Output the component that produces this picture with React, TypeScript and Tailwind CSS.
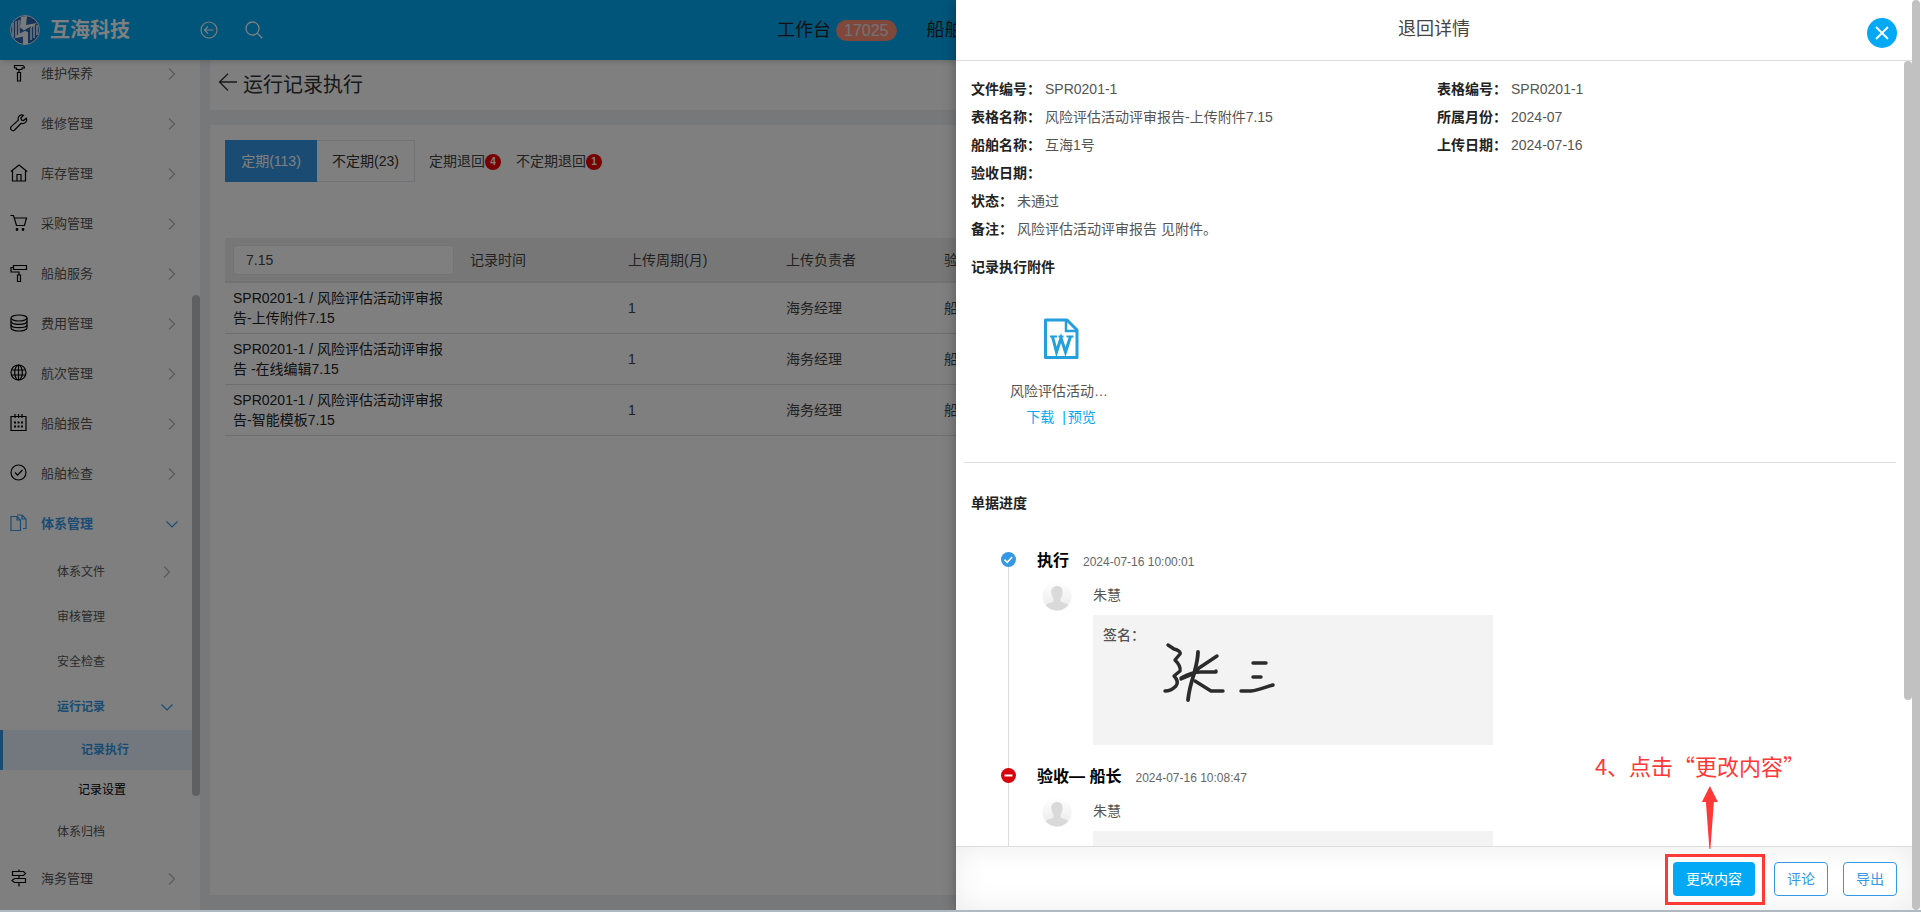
import { useState } from "react";
import type { ReactNode } from "react";

type MenuItem = {
  label: string;
  icon: ReactNode;
};

const Icon = ({ children }: { children: ReactNode }) => (
  <svg
    width="18"
    height="18"
    viewBox="0 0 18 18"
    fill="none"
    stroke="currentColor"
    strokeWidth="1.2"
    aria-hidden="true"
  >
    {children}
  </svg>
);

const menuItems: MenuItem[] = [
  {
    label: "维护保养",
    icon: (
      <Icon>
        <path d="M4.5 1.5h8c1 0 1.800 1 2 2.500h-2.500v1.500H6.500V4H4.500z" />
        <path d="M9 5.500v3M7.500 8.500h3v8.500h-3z" />
      </Icon>
    ),
  },
  {
    label: "维修管理",
    icon: (
      <Icon>
        <path d="M16.300 4.200l-2.800 2.300-2-.5-.6-2 2.500-2.800c-2-.6-4.200.1-5 2-.4 1-.3 2 0 2.900L1.200 12.600c-.8 1-.7 2.400.2 3.300.9.900 2.300.9 3.200.1l6.600-6.700c1.800.6 3.800.1 4.800-1.500.7-1.100.8-2.500.3-3.600z" />
      </Icon>
    ),
  },
  {
    label: "库存管理",
    icon: (
      <Icon>
        <path d="M.8 7.500L9 1l8.200 6.500M2.500 6.500v10.500h13V6.500M7 17v-6.500h4V17" />
      </Icon>
    ),
  },
  {
    label: "采购管理",
    icon: (
      <Icon>
        <path d="M.5 1.500h3l3 10h8l2-7.500H4.500" />
        <circle cx="7" cy="15.500" r=".8" fill="currentColor" />
        <circle cx="13" cy="15.500" r=".8" fill="currentColor" />
      </Icon>
    ),
  },
  {
    label: "船舶服务",
    icon: (
      <Icon>
        <path d="M3.500 1.500h13v4h-13zM3.500 3.500H1v4.500h8v3" />
        <path d="M7.500 11h3v6.500h-3z" />
      </Icon>
    ),
  },
  {
    label: "费用管理",
    icon: (
      <Icon>
        <ellipse cx="9" cy="4" rx="8" ry="3" />
        <path d="M1 4v10c0 1.600 3.600 3 8 3s8-1.400 8-3V4" />
        <path d="M1 7.300c0 1.700 3.600 3 8 3s8-1.300 8-3M1 10.700c0 1.700 3.600 3 8 3s8-1.300 8-3" />
      </Icon>
    ),
  },
  {
    label: "航次管理",
    icon: (
      <Icon>
        <circle cx="8.500" cy="8.500" r="7.500" />
        <ellipse cx="8.500" cy="8.500" rx="3.800" ry="7.500" />
        <path d="M8.500 1v15M1.500 6h14M1.500 11h14" />
      </Icon>
    ),
  },
  {
    label: "船舶报告",
    icon: (
      <Icon>
        <path d="M1 2.500h15v14H1zM5 0v4M8.500 0v4M12 0v4" />
        <path d="M4 8.500h2M7.500 8.500h2M11 8.500h2M4 12.500h2M7.500 12.500h2M11 12.500h2" strokeWidth="2" />
      </Icon>
    ),
  },
  {
    label: "船舶检查",
    icon: (
      <Icon>
        <circle cx="8.500" cy="8.500" r="7.500" />
        <path d="M5 8.500l2.500 2.700L12.500 6" />
      </Icon>
    ),
  },
];

const subItems = ["体系文件", "审核管理", "安全检查"];

const rows = [
  { first: "SPR0201-1 / 风险评估活动评审报", second: "告-上传附件7.15" },
  { first: "SPR0201-1 / 风险评估活动评审报", second: "告 -在线编辑7.15" },
  { first: "SPR0201-1 / 风险评估活动评审报", second: "告-智能模板7.15" },
];

const Chevron = ({ down = false }: { down?: boolean }) => (
  <svg
    width="14"
    height="14"
    viewBox="0 0 14 14"
    fill="none"
    stroke="currentColor"
    strokeWidth="1.2"
    className={down ? "text-[#3498e6]" : "text-[#b4b4b4]"}
    aria-hidden="true"
  >
    {down ? <path d="M1.500 4.500L7 10l5.500-5.500" /> : <path d="M4 1.500L9.500 7 4 12.500" />}
  </svg>
);

const Header = () => (
  <header className="relative flex h-[60px] shrink-0 items-center bg-[#03a9f4] pl-[10px] shadow-md">
    <div className="flex w-[190px] items-center gap-[10px]">
      <svg width="30" height="30" viewBox="0 0 30 30" aria-hidden="true">
        <circle cx="15" cy="15" r="14.500" fill="#2a67b2" stroke="#e8eef5" />
        <path d="M3 8v14M6 6v16M9 5v15M21 10v15M24 9v14M27 10v10" stroke="#f2f5f8" strokeWidth="1.500" />
        <path d="M11 2l6-1-1 9 11-2-6 5h-3l-3 3 3 1v12l-5 .5v-8l-9 2 6-6 4-2-4-3z" fill="#f2f5f8" />
        <path d="M10 18l11-6" stroke="#2a67b2" strokeWidth="1" />
      </svg>
      <span className="text-xl font-bold text-white">互海科技</span>
    </div>
    <div className="flex w-[577px] items-center gap-[27px] text-white">
      <button type="button" aria-label="返回">
        <svg width="18" height="18" viewBox="0 0 18 18" fill="none" stroke="currentColor" strokeWidth="1.200">
          <circle cx="9" cy="9" r="8" />
          <path d="M13.500 9h-9M8 5.500L4.500 9 8 12.500" />
        </svg>
      </button>
      <button type="button" aria-label="搜索">
        <svg width="18" height="18" viewBox="0 0 18 18" fill="none" stroke="currentColor" strokeWidth="1.300">
          <circle cx="7.500" cy="7.500" r="6.500" />
          <path d="M12 12l5.300 5.300" />
        </svg>
      </button>
    </div>
    <nav className="flex items-center gap-[30px] whitespace-nowrap text-lg text-[#222]">
      <a href="#workbench" className="flex items-center gap-[5px]">
        工作台
        <span className="rounded-full bg-[#ff9175] px-2 text-base leading-[21px] text-gray-200">
          17025
        </span>
      </a>
      <a href="#ship">船舶</a>
    </nav>
  </header>
);

const Sidebar = () => (
  <aside className="flex w-[200px] shrink-0 justify-between overflow-hidden bg-white text-[#555]">
    <nav className="-mt-[11px] w-[192px] shrink-0">
      {menuItems.map((item) => (
        <a
          key={item.label}
          href="#menu"
          className="flex h-[50px] items-center pr-[13px] pl-[10px] text-[13px]"
        >
          <span className="mb-[3px] mr-[13px] text-black">{item.icon}</span>
          <span className="flex-1">{item.label}</span>
          <Chevron />
        </a>
      ))}
      <a
        href="#system"
        className="flex h-[50px] items-center pr-[13px] pl-[10px] text-[13px] font-bold text-[#3498e6]"
      >
        <span className="mb-[3px] mr-[13px]">
          <Icon>
            <path d="M1 2.500h6l3.500 3.500v10.500H1zM7 2.500V6h3.500" />
            <path d="M7 1h5l4 4v9.500h-3M12 1v4h4" />
          </Icon>
        </span>
        <span className="flex-1">体系管理</span>
        <Chevron down />
      </a>
      {subItems.map((label, i) => (
        <a
          key={label}
          href="#sub"
          className="flex h-[45px] items-center justify-between pr-[18px] pl-[57px] text-xs"
        >
          {label}
          {i === 0 && <Chevron />}
        </a>
      ))}
      <a
        href="#records"
        className="mb-px flex h-[45px] items-center justify-between pr-[18px] pl-[57px] text-xs font-bold text-[#3498e6]"
      >
        运行记录
        <Chevron down />
      </a>
      <a
        href="#execute"
        className="flex h-10 items-center border-l-3 border-[#3498e6] bg-[#e6f0ff] pl-[78px] text-xs font-bold text-[#3498e6]"
      >
        记录执行
      </a>
      <a href="#settings" className="flex h-10 items-center pl-[78px] text-xs text-black">
        记录设置
      </a>
      <a href="#archive" className="flex h-11 items-center pl-[57px] text-xs">
        体系归档
      </a>
      <a
        href="#marine"
        className="flex h-[50px] items-center pr-[13px] pl-[10px] text-[13px]"
      >
        <span className="mb-[3px] mr-[13px] text-black">
          <Icon>
            <path d="M2.500 2.500h11l2 2-2 2h-11zM15.500 9.500h-11l-2.500 2 2.500 2h11zM9 .5v2M9 6.500v3M9 13.500v4" />
          </Icon>
        </span>
        <span className="flex-1">海务管理</span>
        <Chevron />
      </a>
    </nav>
    <div className="mt-[235px] h-[501px] w-2 rounded-full bg-[#c1c1c1]" />
  </aside>
);

const CountBadge = ({ count }: { count: number }) => (
  <span className="mt-[2px] flex size-4 items-center justify-center rounded-full bg-[#f00000] text-[10px] font-bold text-white">
    {count}
  </span>
);

const Content = () => {
  const [keyword, setKeyword] = useState<string>("7.15");

  return (
    <main className="flex min-w-0 flex-1 flex-col gap-[15px] bg-[#ecf0f5] pb-[15px] pl-[10px]">
      <div className="flex h-[50px] items-center gap-[5px] bg-white pb-1 pl-2 text-xl text-[#333]">
        <button type="button" aria-label="后退">
          <svg width="20" height="20" viewBox="0 0 20 20" fill="none" stroke="currentColor" strokeWidth="1.300">
            <path d="M19 9H2M10 .8L1.500 9l8.500 8.500" />
          </svg>
        </button>
        <h1 className="pt-1">运行记录执行</h1>
      </div>
      <section className="mr-[10px] flex-1 bg-white px-[15px] pt-[15px] text-sm text-[#444]">
        <div className="flex h-[42px] items-center whitespace-nowrap">
          <button type="button" className="h-full w-[92px] bg-[#3498e6] text-white">
            定期(113)
          </button>
          <button type="button" className="h-full w-[98px] border border-l-0 border-gray-200 text-[#333]">
            不定期(23)
          </button>
          <button type="button" className="ml-[14px] flex items-center">
            定期退回
            <CountBadge count={4} />
          </button>
          <button type="button" className="ml-[15px] flex items-center">
            不定期退回
            <CountBadge count={1} />
          </button>
        </div>
        <table className="mt-14 w-full table-fixed text-left">
          <colgroup>
            <col className="w-[237px]" />
            <col className="w-[158px]" />
            <col className="w-[158px]" />
            <col className="w-[158px]" />
            <col />
          </colgroup>
          <thead>
            <tr className="h-11 border-b-2 border-[#e4e4e4] bg-[#eeeeee]">
              <th className="px-2 font-normal">
                <input
                  type="text"
                  aria-label="表格名称"
                  value={keyword}
                  onChange={(e) => setKeyword(e.target.value)}
                  className="block h-[30px] w-full rounded-sm border border-gray-200 bg-white px-3 text-sm"
                />
              </th>
              <th className="px-2 font-normal">记录时间</th>
              <th className="px-2 font-normal">上传周期(月)</th>
              <th className="px-2 font-normal">上传负责者</th>
              <th className="px-2 font-normal">验收</th>
            </tr>
          </thead>
          <tbody>
            {rows.map((row) => (
              <tr key={row.second} className="h-[51px] border-b border-[#dddddd]">
                <td className="px-2 leading-5 whitespace-nowrap text-[#222]">
                  {row.first}
                  <br />
                  {row.second}
                </td>
                <td />
                <td className="px-2">1</td>
                <td className="px-2">海务经理</td>
                <td className="px-2">船长</td>
              </tr>
            ))}
          </tbody>
        </table>
      </section>
    </main>
  );
};

const Field = ({ label, value }: { label: string; value?: string }) => (
  <div className="flex gap-1 px-[7px]">
    <dt className="font-bold text-[#222]">{label}：</dt>
    <dd>{value}</dd>
  </div>
);

const Avatar = () => (
  <svg width="30" height="30" viewBox="0 0 30 30" className="shrink-0" aria-hidden="true">
    <defs>
      <linearGradient id="avatar-bg" x1="0" y1="0" x2="0" y2="1">
        <stop offset="0" stopColor="#ffffff" />
        <stop offset="1" stopColor="#e9e9e9" />
      </linearGradient>
      <clipPath id="avatar-clip">
        <circle cx="15" cy="15" r="14.500" />
      </clipPath>
    </defs>
    <circle cx="15" cy="15" r="14.500" fill="url(#avatar-bg)" />
    <g fill="#d9d9d9" clipPath="url(#avatar-clip)">
      <path d="M15 5c3.600 0 5.700 2.300 5.700 6 0 3-1.200 5-2.200 6.500v3l6.500 2.500c2 1 3 3 3 7H2c0-4 1-6 3-7l6.500-2.500v-3C10.500 16 9.300 14 9.300 11c0-3.700 2.100-6 5.700-6z" />
    </g>
  </svg>
);

const Signature = () => (
  <svg
    width="114"
    height="62"
    viewBox="0 0 114 62"
    fill="none"
    stroke="#2b2b2b"
    strokeWidth="3.400"
    strokeLinecap="round"
    strokeLinejoin="round"
    aria-label="签名"
  >
    <path d="M5 3l6 4c4 1 7 3 6 5l-5 6c4 4 6 7 5 11l-6 5c3 3 5 6 2 10-3 3-6 5-11 5" />
    <path d="M35 10c0 7-2 14-4 22-3 9-5 17-6 26" strokeWidth="3.800" />
    <path d="M54 14L36 26c-2 2-3 4-6 6l-12 5M18 36c9-5 14-6 20-6h15v-1M32 39l16 10h12" />
    <path d="M90 21h13M90 35h8M78 49h10c8-1 14-4 22-6" />
  </svg>
);

type StepProps = {
  title: string;
  time: string;
  done?: boolean;
  children?: ReactNode;
};

const Step = ({ title, time, done = false, children }: StepProps) => (
  <li className="flex h-[216px] gap-[21px]">
    <div className="flex w-[15px] flex-col items-center">
      <svg width="15" height="15" viewBox="0 0 15 15" className="shrink-0" aria-hidden="true">
        <circle cx="7.500" cy="7.500" r="7.500" fill={done ? "#3498e6" : "#d9000b"} />
        <path
          d={done ? "M3.500 7.600l2.700 2.700 5-5.300" : "M3.500 7.500h8"}
          fill="none"
          stroke="#fff"
          strokeWidth={done ? 1.5 : 2}
        />
      </svg>
      <div className="w-px flex-1 bg-[#dddddd]" />
    </div>
    <div className="-mt-[3px]">
      <div className="flex items-center gap-[14px] leading-6">
        <h4 className="text-base leading-6 font-bold text-black">{title}</h4>
        <time className="pt-[3px] text-xs leading-[21px] text-[#666]">{time}</time>
      </div>
      <div className="mt-2 flex items-start gap-[21px] pl-[5px]">
        <Avatar />
        <div>
          <p className="leading-7 text-[#555]">朱慧</p>
          <div className="mt-[6px] flex h-[130px] w-[400px] bg-[#f3f3f3] p-[10px]">
            {children}
          </div>
        </div>
      </div>
    </div>
  </li>
);

const Drawer = () => (
  <div
    role="dialog"
    aria-label="退回详情"
    className="absolute inset-y-0 right-0 flex w-1/2 flex-col bg-white text-sm text-[#555] shadow-[0_0_12px_rgba(0,0,0,0.3)]"
  >
    <div className="relative flex h-[61px] shrink-0 items-center justify-center border-b border-[#dddddd] pb-[2px]">
      <h2 className="text-lg text-[#444]">退回详情</h2>
      <button
        type="button"
        aria-label="关闭"
        className="absolute top-[18px] right-[15px] flex size-[30px] items-center justify-center rounded-full bg-[#03a9f4] text-white"
      >
        <svg width="14" height="14" viewBox="0 0 14 14" fill="none" stroke="currentColor" strokeWidth="1.800">
          <path d="M1 1l12 12M13 1L1 13" />
        </svg>
      </button>
    </div>

    <div className="flex min-h-0 flex-1">
      <div className="min-w-0 flex-1 overflow-hidden px-2 pt-[14px]">
        <dl className="grid grid-cols-2 leading-7">
          <Field label="文件编号" value="SPR0201-1" />
          <Field label="表格编号" value="SPR0201-1" />
          <Field label="表格名称" value="风险评估活动评审报告-上传附件7.15" />
          <Field label="所属月份" value="2024-07" />
          <Field label="船舶名称" value="互海1号" />
          <Field label="上传日期" value="2024-07-16" />
          <div className="col-span-2">
            <Field label="验收日期" />
            <Field label="状态" value="未通过" />
            <Field label="备注" value="风险评估活动评审报告 见附件。" />
          </div>
        </dl>
        <h3 className="mt-[10px] px-[7px] leading-7 font-bold text-[#222]">记录执行附件</h3>
        <div className="mt-[37px] ml-[45px] flex w-[100px] flex-col items-center">
          <svg width="36" height="42" viewBox="0 0 36 42" fill="none" stroke="#229fdc" className="ml-[3px]" aria-hidden="true">
            <path d="M3 2h21l10 10v27.500H2.500V2z" strokeWidth="3" strokeLinejoin="round" />
            <path d="M23 2v11h11" strokeWidth="2.500" />
            <path d="M7 18.500h7M15.500 18.500h5M23.500 18.500h7" strokeWidth="2" />
            <path d="M9.500 18.500l4 15.500L18 20l4.500 14 5-15.500" strokeWidth="3" />
          </svg>
          <p className="mt-[18px] leading-[26px]">风险评估活动…</p>
          <div className="flex pl-1 leading-[26px] text-[#03a9f4]">
            <a href="#download">下载</a>
            <span className="pr-[2px] pl-2">|</span>
            <a href="#preview">预览</a>
          </div>
        </div>
        <hr className="mt-8 border-[#dddddd]" />
        <h3 className="mt-[26px] px-[7px] leading-7 font-bold text-[#222]">单据进度</h3>
        <ol className="mt-[35px] pl-[37px]">
          <Step title="执行" time="2024-07-16 10:00:01" done>
            <span className="font-medium">签名：</span>
            <div className="mt-[17px] ml-[18px]">
              <Signature />
            </div>
          </Step>
          <Step title="验收— 船长" time="2024-07-16 10:08:47" />
        </ol>
      </div>
      <div className="h-[639px] w-2 shrink-0 rounded-full bg-[#c1c1c1]" />
    </div>

    <footer className="flex h-16 shrink-0 items-center justify-end border-t border-[#dddddd] pr-[15px] shadow-[inset_0_0_30px_rgba(0,0,0,0.08)]">
      <div className="relative mr-[19px]">
        <button type="button" className="h-[34px] w-[82px] rounded-sm bg-[#03a9f4] text-white">
          更改内容
        </button>
        <div className="pointer-events-none absolute -top-2 -right-[10px] -bottom-[9px] -left-2 border-3 border-[#ff3838]" />
        <div className="pointer-events-none absolute bottom-[47px] left-1/2 flex -translate-x-1/2 flex-col items-center text-[#ff3838]">
          <span className="-ml-7 font-['Noto_Sans_CJK_SC',sans-serif] text-[22px] leading-8 whitespace-nowrap">
            4、点击“更改内容”
          </span>
          <svg width="18" height="63" viewBox="0 0 18 63" className="mt-[5px] ml-[-9px]" fill="currentColor" aria-hidden="true">
            <path d="M9 0l8 16h-4L9.500 63h-1L5 16H1z" />
          </svg>
        </div>
      </div>
      <div className="flex gap-[15px] text-[#3498e6]">
        <button type="button" className="h-[34px] w-[54px] rounded-sm border border-[#3498e6] bg-white">
          评论
        </button>
        <button type="button" className="h-[34px] w-[54px] rounded-sm border border-[#3498e6] bg-white">
          导出
        </button>
      </div>
    </footer>
  </div>
);

const App = () => {
  return (
    <div
      lang="zh-CN"
      className="flex h-screen overflow-hidden border-b-2 border-[#b0b8c0] bg-white font-['Liberation_Sans','Noto_Sans_CJK_SC',sans-serif]"
    >
      <div className="relative flex min-w-0 flex-1 flex-col overflow-hidden">
        <Header />
        <div className="flex min-h-0 flex-1">
          <Sidebar />
          <Content />
        </div>
        <div className="absolute inset-0 bg-black/50" />
        <Drawer />
      </div>
      <div className="mr-px w-2 rounded-full bg-[#c1c1c1]" />
    </div>
  );
};

export default App;
